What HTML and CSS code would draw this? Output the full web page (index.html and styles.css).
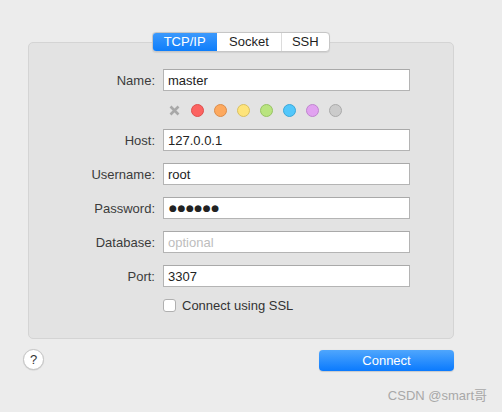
FILE: index.html
```html
<!DOCTYPE html>
<html lang="en">
<head>
<meta charset="utf-8">
<title>Connection</title>
<link rel="stylesheet" href="styles.css">
</head>
<body>
<div class="window">
  <div class="tabs">
    <div class="tab active">TCP/IP</div>
    <div class="tab">Socket</div>
    <div class="tab last">SSH</div>
  </div>
  <div class="panel">
    <div class="form">
      <label class="label">Name:</label>
      <input class="field" type="text" value="master">

      <span></span>
      <div class="colors">
        <svg class="clear" width="13" height="13" viewBox="0 0 13 13"><path d="M2.5 2.5 L10.5 10.5 M10.5 2.5 L2.5 10.5" stroke="#a8a8a8" stroke-width="2.6" stroke-linecap="butt"/></svg>
        <span class="dot red"></span>
        <span class="dot orange"></span>
        <span class="dot yellow"></span>
        <span class="dot green"></span>
        <span class="dot blue"></span>
        <span class="dot purple"></span>
        <span class="dot gray"></span>
      </div>

      <label class="label">Host:</label>
      <input class="field" type="text" value="127.0.0.1">

      <label class="label">Username:</label>
      <input class="field" type="text" value="root">

      <label class="label">Password:</label>
      <div class="field pw">●●●●●●</div>

      <label class="label">Database:</label>
      <input class="field" type="text" placeholder="optional">

      <label class="label">Port:</label>
      <input class="field" type="text" value="3307">

      <span></span>
      <label class="check"><span class="box"></span>Connect using SSL</label>
    </div>
  </div>
  <div class="actions">
    <div class="help">?</div>
    <div class="connect">Connect</div>
  </div>
  <div class="watermark">CSDN @smart哥</div>
</div>
</body>
</html>
```
FILE: styles.css
```css
html, body {
  margin: 0;
  padding: 0;
  background: #ececec;
}
body {
  font-family: "Liberation Sans", Arial, "Noto Sans CJK SC", sans-serif;
  font-size: 13px;
  color: #3a3a3a;
  width: 502px;
  height: 412px;
  overflow: hidden;
}
.window {
  padding-top: 32px;
}
.tabs {
  position: relative;
  z-index: 1;
  display: flex;
  width: 178px;
  height: 20px;
  margin: 0 0 0 152px;
  box-sizing: border-box;
  border: 1px solid #c6c6c6;
  border-radius: 4px;
  background: #fff;
  overflow: hidden;
  box-shadow: 0 0.5px 1px rgba(0,0,0,0.08);
}
.tab {
  width: 65px;
  line-height: 18px;
  text-align: center;
  color: #1e1e1e;
  border-right: 1px solid #dcdcdc;
  box-sizing: border-box;
}
.tab.active {
  background: linear-gradient(#3f9bfc, #0b7cfb);
  color: #fff;
  border-right: none;
  margin: -1px 0 -1px -1px;
  line-height: 20px;
  width: 66px;
}
.tab.last {
  width: 48px;
  border-right: none;
}
.panel {
  margin: -10px 48px 0 28px;
  border: 1px solid #d4d4d4;
  border-radius: 5px;
  background: #e3e3e3;
  padding: 26px 0 26px 36px;
}
.form {
  display: grid;
  grid-template-columns: 90px 247px;
  column-gap: 8px;
  row-gap: 12px;
  align-items: center;
}
.label {
  text-align: right;
  color: #3b3b3b;
}
.field {
  box-sizing: border-box;
  height: 22px;
  width: 247px;
  margin: 0;
  border: 1px solid #b4b4b4;
  border-top-color: #a9a9a9;
  background: #fff;
  padding: 0 4px;
  font-family: inherit;
  font-size: 13px;
  color: #222;
  outline: none;
  border-radius: 0;
}
.field::placeholder {
  color: #bdbdbd;
}
.pw {
  display: flex;
  align-items: center;
  font-family: "DejaVu Sans", sans-serif;
  font-size: 9px;
  letter-spacing: 0.6px;
  color: #222;
  padding-left: 5px;
}
.colors {
  display: flex;
  align-items: center;
  gap: 10px;
  height: 14px;
  padding-left: 5px;
}
.clear {
  display: block;
}
.dot {
  width: 13px;
  height: 13px;
  box-sizing: border-box;
  border-radius: 50%;
  border: 1px solid;
}
.red { background: #fc6361; border-color: #de4f4c; }
.orange { background: #fda95f; border-color: #dc8c4a; }
.yellow { background: #fee47b; border-color: #d9c062; }
.green { background: #b9e47f; border-color: #98c364; }
.blue { background: #52c7fb; border-color: #3aa7d8; }
.purple { background: #e1a2f0; border-color: #bf85ce; }
.gray { background: #cbcbcb; border-color: #aaaaaa; }
.check {
  display: flex;
  align-items: center;
  gap: 6px;
  height: 13px;
  color: #333;
}
.box {
  width: 13px;
  height: 13px;
  box-sizing: border-box;
  border: 1px solid #b0b0b0;
  border-radius: 3px;
  background: #fff;
}
.actions {
  display: flex;
  justify-content: space-between;
  align-items: flex-start;
  margin: 10px 48px 0 23px;
}
.help {
  width: 21px;
  height: 21px;
  box-sizing: border-box;
  border: 1px solid #c4c4c4;
  border-radius: 50%;
  background: #fff;
  text-align: center;
  line-height: 19px;
  font-size: 13px;
  color: #333;
  box-shadow: 0 0.5px 1px rgba(0,0,0,0.12);
}
.connect {
  width: 135px;
  height: 21px;
  margin-top: 1px;
  border-radius: 4px;
  background: linear-gradient(#4fa6fd, #0a7afe);
  color: #fff;
  text-align: center;
  line-height: 21px;
  font-size: 13px;
  box-shadow: 0 0.5px 1px rgba(0,0,0,0.15);
}
.watermark {
  text-align: right;
  padding-right: 15px;
  margin-top: 17px;
  color: #a8a8a8;
  font-size: 13px;
  line-height: 16px;
}
```
